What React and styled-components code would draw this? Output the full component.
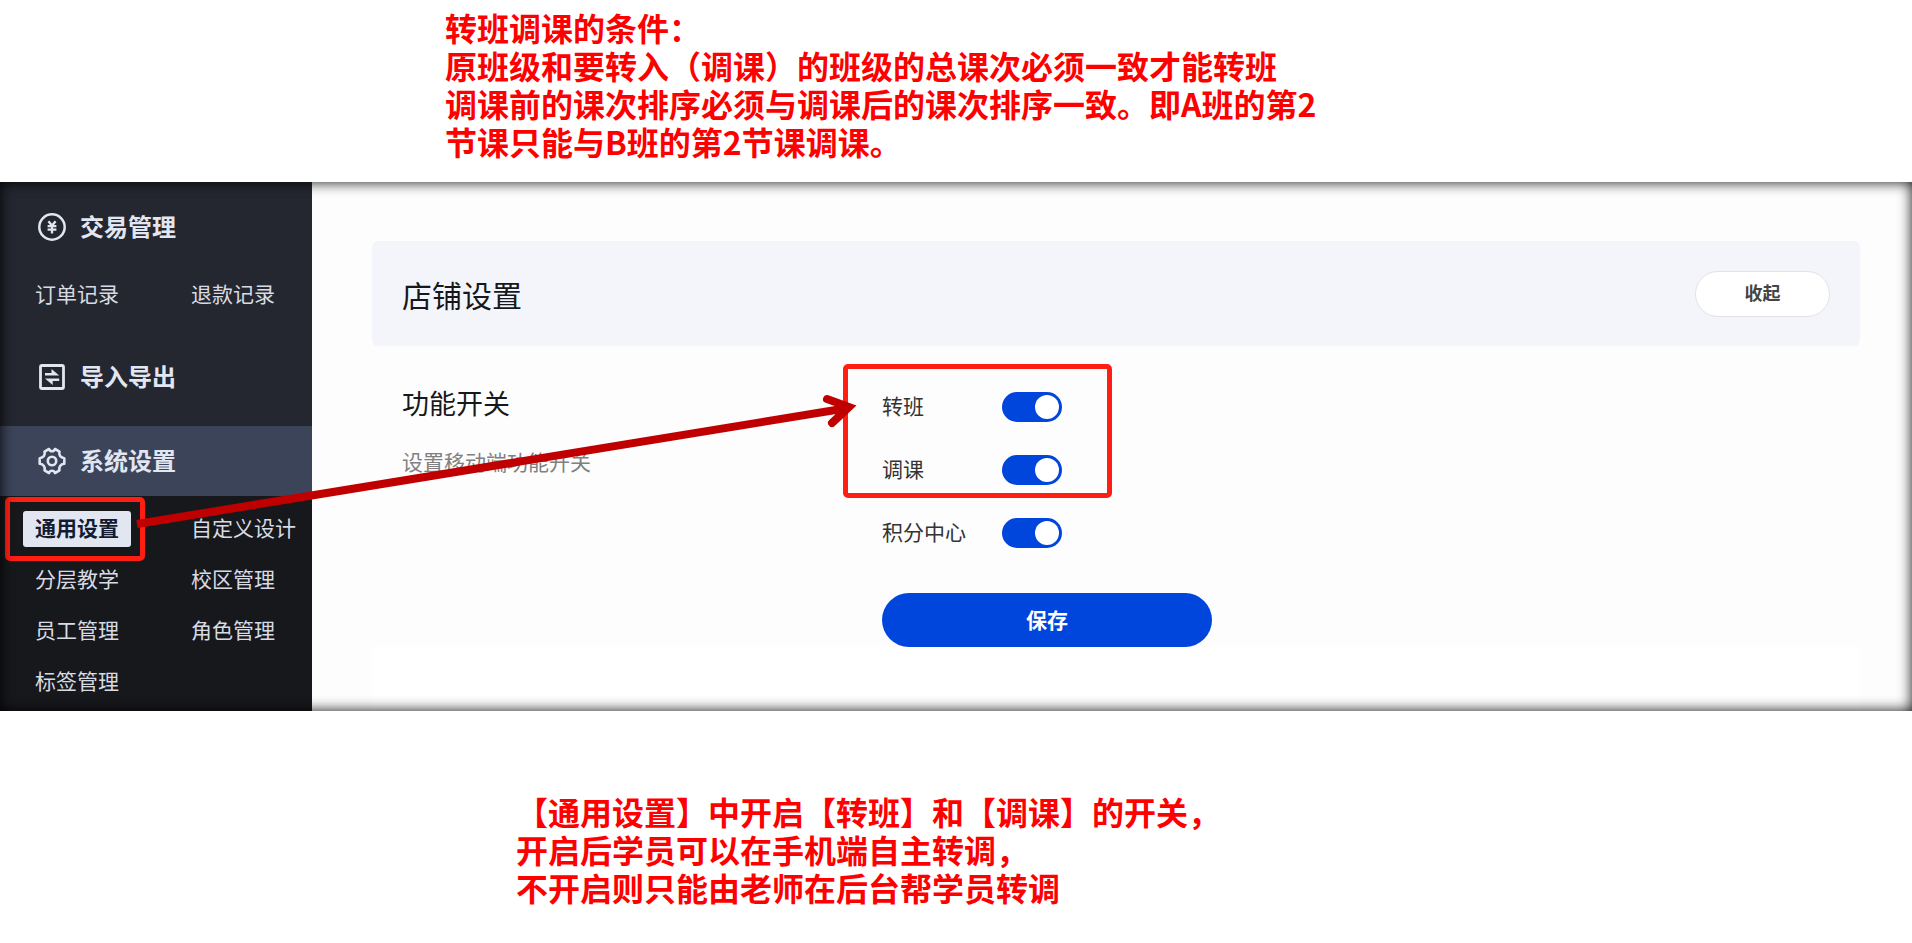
import React, { useState } from 'react'
import styled, { createGlobalStyle, css } from 'styled-components'

const GlobalStyle = createGlobalStyle`
        * {
                box-sizing: border-box;
        }

        body {
                margin: 0;
                background: #fff;
                font-family: "Noto Sans CJK SC", sans-serif;
        }

        button, input {
                font-family: inherit;
        }
`;

const PageStyled = styled.div`
        display: flex;
        flex-direction: column;
`;

const NoteStyled = styled.p`
        margin: 0;
        padding: ${({ $padding }) => $padding};
        color: #ff0000;
        font-size: 32px;
        font-weight: 700;
        line-height: 38px;
        white-space: pre-line;
`;

const PanelStyled = styled.div`
        position: relative;
        display: flex;
        min-height: 529px;
        background: #fdfdfd;

        &::after {
                content: '';
                position: absolute;
                inset: 0;
                box-shadow: inset 0 0 14px rgba(0, 0, 0, 0.95);
                pointer-events: none;
        }
`;

const SidebarStyled = styled.nav`
        display: flex;
        flex-direction: column;
        flex: none;
        width: 312px;
        padding-top: 10px;
        background: #242730;
`;

const MenuHeadingStyled = styled.h2`
        display: flex;
        align-items: center;
        gap: 14px;
        height: 70px;
        margin: 0;
        padding-left: 38px;
        color: #e1e6f1;
        font-size: 24px;
        font-weight: 700;
        background: ${({ $active }) => ($active ? '#3b4459' : 'transparent')};

        svg {
                width: 28px;
                height: 28px;
        }

        span {
                padding-bottom: 3px;
        }
`;

const SystemHeadingStyled = styled(MenuHeadingStyled)`
        margin-top: 14px;
`;

const MenuListStyled = styled.ul`
        display: grid;
        grid-template-columns: 156px 1fr;
        grid-auto-rows: 51px;
        align-items: center;
        align-content: start;
        margin: 0;
        padding: 7px 0 22px 23px;
        list-style: none;

        ${({ $dark }) => $dark && css`
                flex: 1;
                padding-bottom: 0;
                background: #17181c;
        `}
`;

const MenuItemStyled = styled.li`
        position: relative;
`;

const MenuLinkStyled = styled.a`
        display: inline-block;
        padding: 0 12px 3px;
        border-radius: 3px;
        color: ${({ $active }) => ($active ? '#141c33' : '#d8dbe3')};
        background: ${({ $active }) => ($active ? '#e1e6f1' : 'transparent')};
        font-size: 21px;
        font-weight: ${({ $active }) => ($active ? 700 : 400)};
        line-height: 33px;
        white-space: nowrap;
        text-decoration: none;
`;

// red frame drawn over the part it points out
const MarkStyled = styled.span`
        position: absolute;
        inset: ${({ $inset }) => $inset};
        border: 5px solid #ff1e12;
        border-radius: 5px;
        pointer-events: none;
`;

const MainStyled = styled.main`
        display: flex;
        flex-direction: column;
        flex: 1;
        padding: 59px 52px 0 60px;
`;

const CardHeaderStyled = styled.header`
        display: flex;
        align-items: center;
        justify-content: space-between;
        height: 105px;
        padding: 0 30px;
        border-radius: 6px;
        background: #f4f5fa;
`;

const TitleStyled = styled.h1`
        margin: 0;
        color: #17181c;
        font-size: 30px;
        font-weight: 400;
        line-height: 44px;
`;

const CollapseButtonStyled = styled.button`
        width: 135px;
        height: 46px;
        padding: 0 0 3px;
        border: 1px solid #e2e2e4;
        border-radius: 23px;
        color: #444;
        background: #fff;
        font-size: 18px;
        font-weight: 700;
`;

const SectionStyled = styled.section`
        display: grid;
        grid-template-columns: 480px 1fr;
        padding: 29px 30px 0;
`;

const SectionTitleStyled = styled.h2`
        margin: 0;
        color: #17181c;
        font-size: 27px;
        font-weight: 400;
        line-height: 56px;
`;

const SectionTextStyled = styled.p`
        margin: 0;
        color: #808080;
        font-size: 21px;
        line-height: 60px;
`;

const FormStyled = styled.form`
        display: flex;
        flex-direction: column;
        align-items: flex-start;
`;

const MarkedRowsStyled = styled.div`
        position: relative;
`;

const RowStyled = styled.label`
        display: flex;
        align-items: center;
        height: 63px;
        color: #333;
        font-size: 21px;
`;

const RowNameStyled = styled.span`
        width: 120px;
        padding-bottom: 3px;
`;

const SwitchStyled = styled.input`
        appearance: none;
        display: flex;
        align-items: center;
        width: 60px;
        height: 30px;
        margin: 0;
        padding: 0 3px;
        border-radius: 15px;
        background: #bfc4cf;
        cursor: pointer;

        &::before {
                content: '';
                width: 24px;
                height: 24px;
                border-radius: 50%;
                background: #fff;
        }

        &:checked {
                justify-content: flex-end;
                background: #0045dc;
        }
`;

const SaveButtonStyled = styled.button`
        width: 330px;
        height: 54px;
        margin-top: 29px;
        padding: 0 0 3px;
        border: 0;
        border-radius: 27px;
        color: #fff;
        background: #0045dc;
        font-size: 21px;
        font-weight: 700;
`;

const BlankStyled = styled.div`
        flex: 1;
        background: #fff;
`;

const ArrowStyled = styled.svg`
        position: absolute;
        left: 130px;
        top: 200px;
        z-index: 1;
        pointer-events: none;
`;

function YenIcon() {
        return (
                <svg viewBox="0 0 28 28" fill="none" stroke="currentColor" strokeWidth="2.5">
                        <circle cx="14" cy="14" r="12.7" />
                        <path d="M10.4 8.2L14 12.6l3.6-4.4M14 12v8.4M9.6 13.2h8.8M9.6 16.6h8.8" strokeWidth="2.3" />
                </svg>
        )
}

function TransferIcon() {
        return (
                <svg viewBox="0 0 28 28" fill="currentColor">
                        <rect x="2.5" y="2.5" width="23" height="23" rx="1.5" fill="none" stroke="currentColor" strokeWidth="2.8" />
                        <path d="M7 10h6.500V6L21.200 12.600H7zM21.200 18h-6.500V22L7 15.400h14.200z" />
                </svg>
        )
}

function GearIcon() {
        return (
                <svg viewBox="0 0 28 28" fill="none" stroke="currentColor" strokeWidth="2.6" strokeLinejoin="round">
                        <path d="M11 2C12 5 16 5 17 2L21.5 4.6C20.5 8 22.5 10.8 26.3 11.2V16.8C22.5 17.2 20.5 20 21.5 23.4L17 26C16 23 12 23 11 26L6.5 23.4C7.5 20 5.5 17.2 1.7 16.8V11.2C5.5 10.8 7.5 8 6.5 4.6Z" />
                        <circle cx="14" cy="14" r="4.2" />
                </svg>
        )
}

const tradeMenu = ['订单记录', '退款记录'];
const systemMenu = ['通用设置', '自定义设计', '分层教学', '校区管理', '员工管理', '角色管理', '标签管理'];

function Menu({ items, active, dark }) {
        return (
                <MenuListStyled $dark={dark}>
                        {items.map(item =>
                                <MenuItemStyled key={item}>
                                        <MenuLinkStyled href='#' $active={item === active}>{item}</MenuLinkStyled>
                                        {item === active && <MarkStyled $inset='-14px 34px -14px -18px' />}
                                </MenuItemStyled>
                        )}
                </MenuListStyled>
        )
}

function SwitchRow({ name }) {
        const [checked, setChecked] = useState(true)
        return (
                <RowStyled>
                        <RowNameStyled>{name}</RowNameStyled>
                        <SwitchStyled type='checkbox' checked={checked} onChange={(e) => setChecked(e.target.checked)} />
                </RowStyled>
        )
}

export default function App() {
        return (
                <PageStyled>
                        <GlobalStyle />
                        <NoteStyled $padding='8px 0 22px 445px'>
                                {'转班调课的条件：\n原班级和要转入（调课）的班级的总课次必须一致才能转班\n调课前的课次排序必须与调课后的课次排序一致。即A班的第2\n节课只能与B班的第2节课调课。'}
                        </NoteStyled>
                        <PanelStyled>
                                <SidebarStyled>
                                        <MenuHeadingStyled><YenIcon /><span>交易管理</span></MenuHeadingStyled>
                                        <Menu items={tradeMenu} />
                                        <MenuHeadingStyled><TransferIcon /><span>导入导出</span></MenuHeadingStyled>
                                        <SystemHeadingStyled $active><GearIcon /><span>系统设置</span></SystemHeadingStyled>
                                        <Menu items={systemMenu} active='通用设置' dark />
                                </SidebarStyled>
                                <MainStyled>
                                        <CardHeaderStyled>
                                                <TitleStyled>店铺设置</TitleStyled>
                                                <CollapseButtonStyled type='button'>收起</CollapseButtonStyled>
                                        </CardHeaderStyled>
                                        <SectionStyled>
                                                <div>
                                                        <SectionTitleStyled>功能开关</SectionTitleStyled>
                                                        <SectionTextStyled>设置移动端功能开关</SectionTextStyled>
                                                </div>
                                                <FormStyled onSubmit={(e) => e.preventDefault()}>
                                                        <MarkedRowsStyled>
                                                                <SwitchRow name='转班' />
                                                                <SwitchRow name='调课' />
                                                                <MarkStyled $inset='-11px -50px 3px -39px' />
                                                        </MarkedRowsStyled>
                                                        <SwitchRow name='积分中心' />
                                                        <SaveButtonStyled type='submit'>保存</SaveButtonStyled>
                                                </FormStyled>
                                        </SectionStyled>
                                        <BlankStyled />
                                </MainStyled>
                                <ArrowStyled width="740" height="160" fill="none" stroke="#c00000" strokeWidth="8">
                                        <path d="M7 142L718 26" />
                                        <path d="M697 17L719 25L702 41" strokeLinecap="round" />
                                </ArrowStyled>
                        </PanelStyled>
                        <NoteStyled $padding='81px 0 0 516px'>
                                {'【通用设置】中开启【转班】和【调课】的开关，\n开启后学员可以在手机端自主转调，\n不开启则只能由老师在后台帮学员转调'}
                        </NoteStyled>
                </PageStyled>
        )
}
